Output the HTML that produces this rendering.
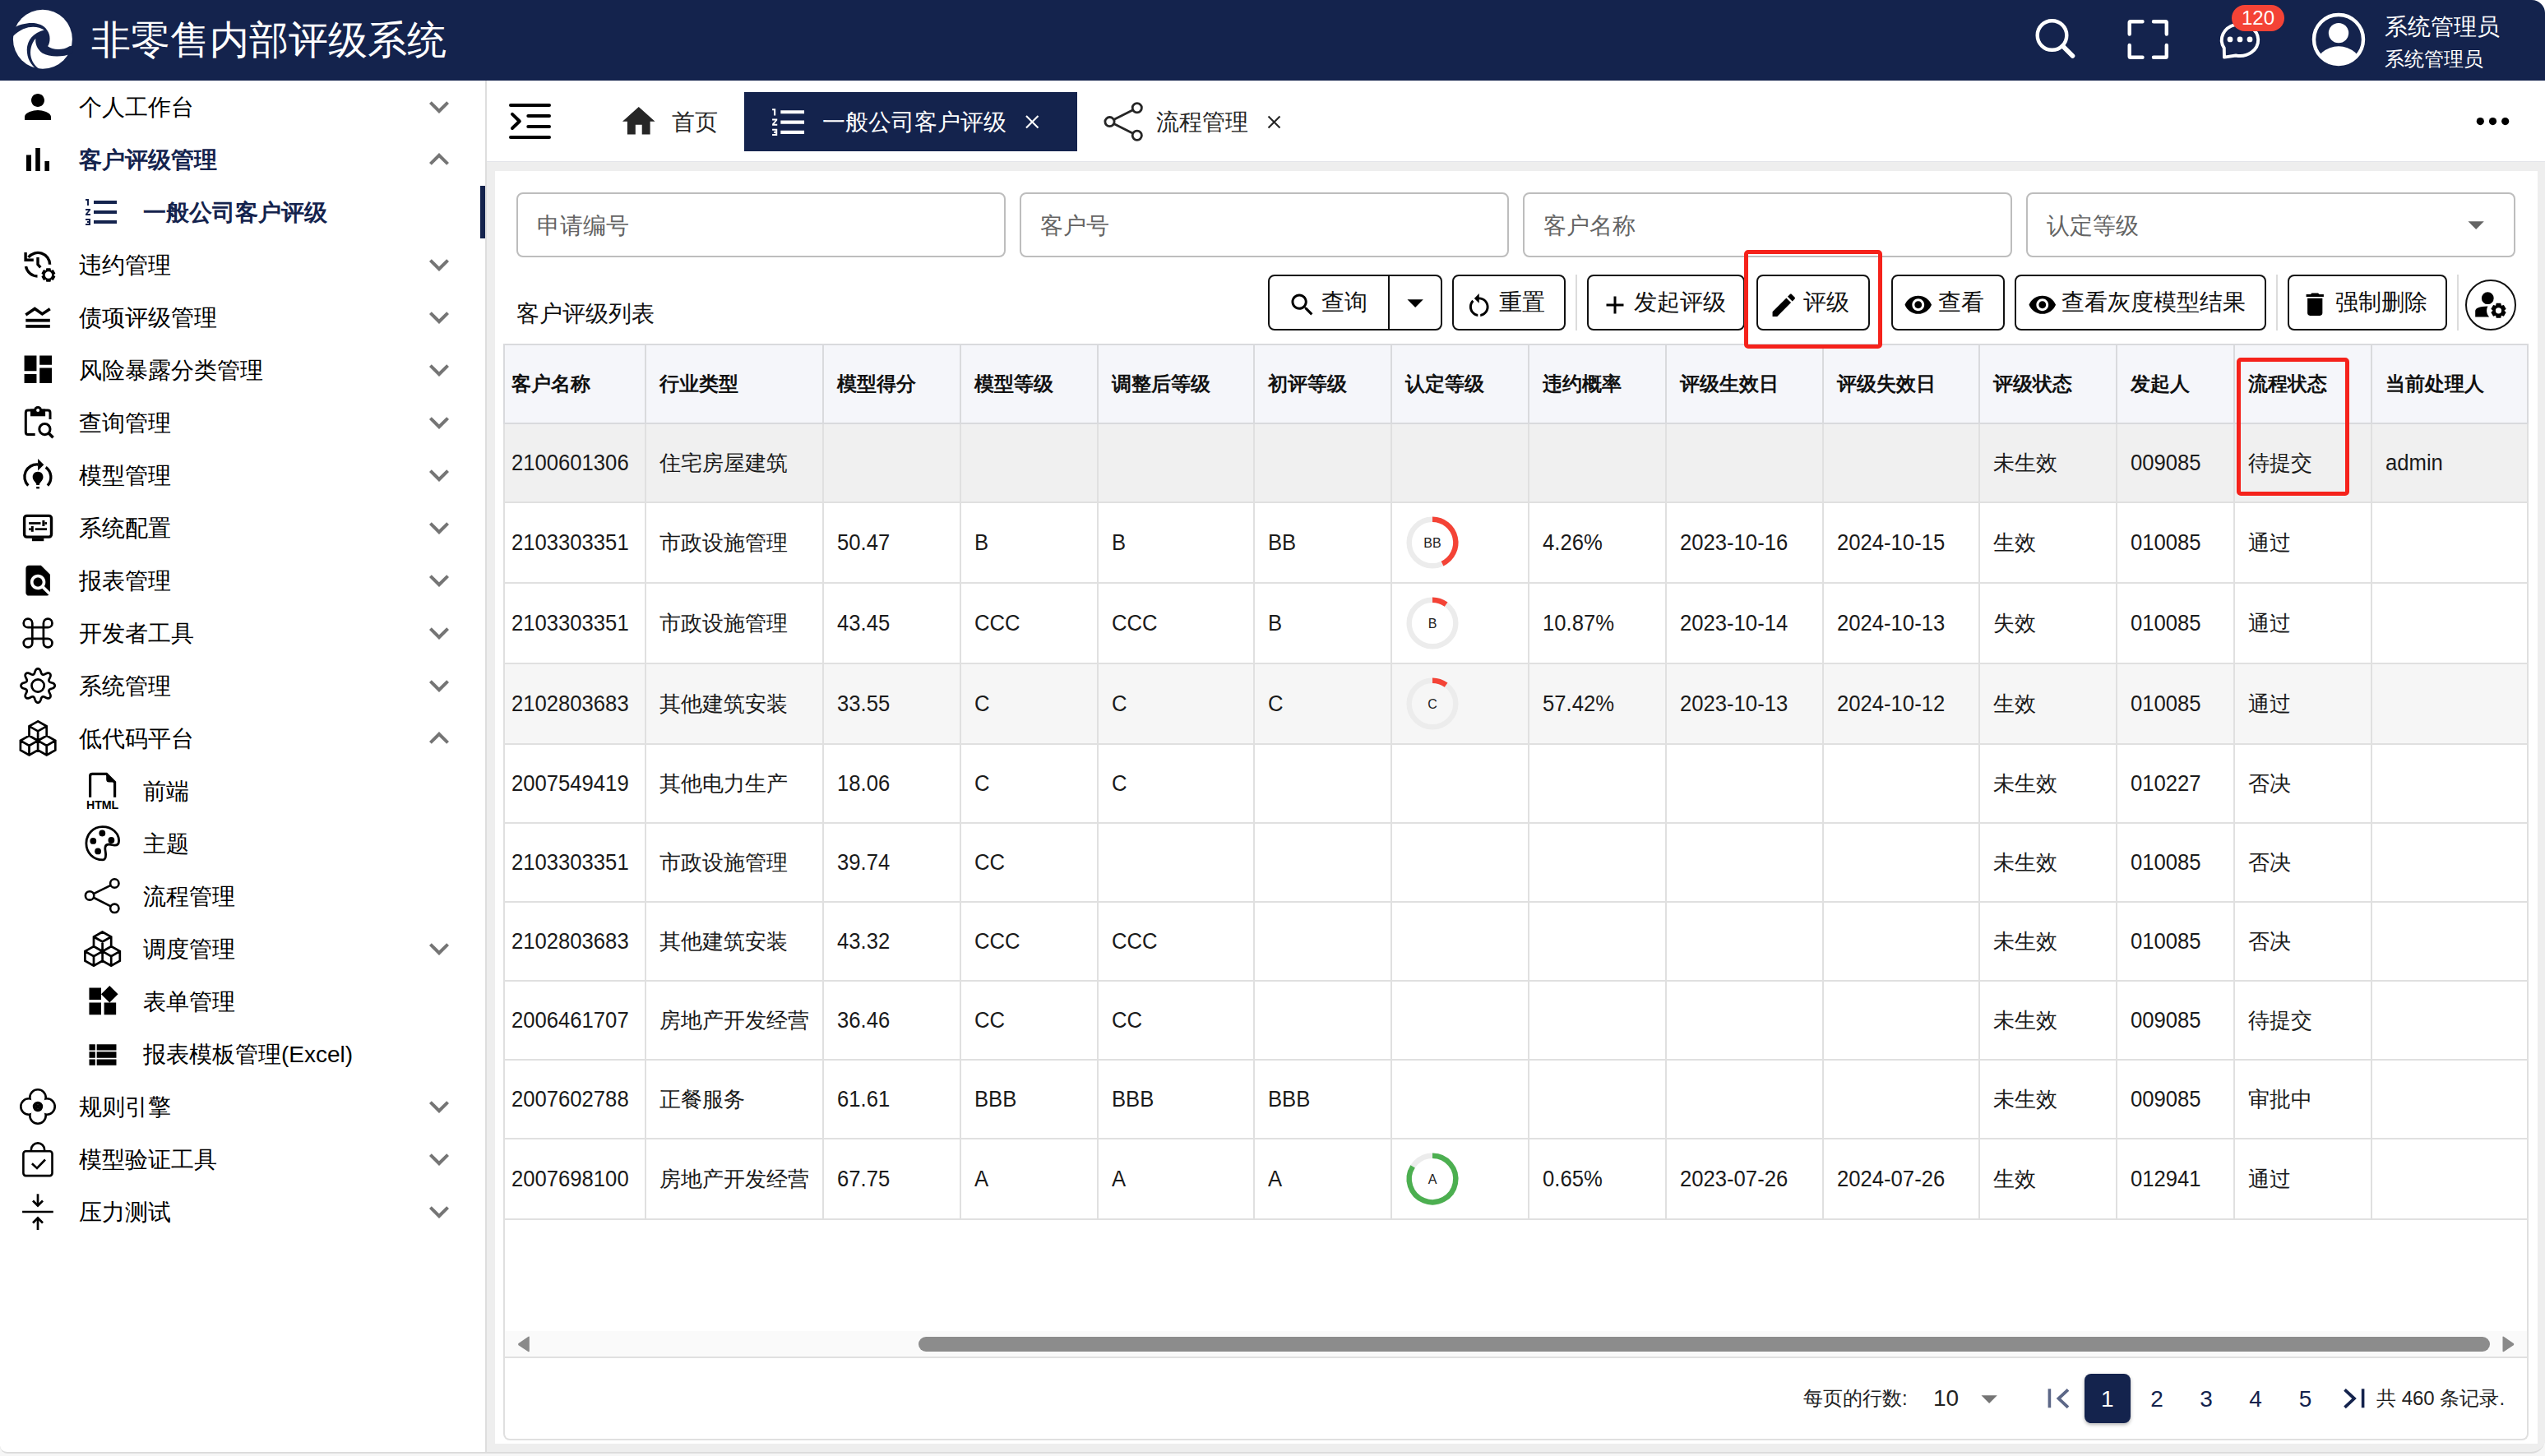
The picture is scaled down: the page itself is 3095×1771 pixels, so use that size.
<!DOCTYPE html>
<html><head><meta charset="utf-8"><style>
html,body{margin:0;padding:0;}
body{width:3095px;height:1771px;overflow:hidden;background:#f6f6f6;font-family:"Liberation Sans",sans-serif;position:relative;}
.a{position:absolute;}
.t{white-space:nowrap;}
</style></head><body>
<div class="a" style="left:0px;top:0px;width:3095px;height:1766px;background:#eeeeee;border-radius:0 0 16px 8px;"></div>
<div class="a" style="left:3040px;top:0px;width:55px;height:40px;background:#fff;"></div>
<div class="a" style="left:0px;top:0px;width:3095px;height:98px;background:#14234d;border-top-right-radius:16px;"></div>
<svg class="a" style="left:0px;top:0px;overflow:visible" width="100" height="98" viewBox="0 0 100 98" fill="#000"><circle cx="51.9" cy="47.8" r="36" fill="#fff"/><path fill="#14234d" d="M17.09,33.76 C29.49,26.38 50.17,24.90 57.25,36.71 C61.68,42.03 61.39,51.48 58.14,56.21 C63.16,60.64 76.15,61.82 84.42,56.21 L89.15,55.62 L87.97,65.07 C74.97,70.09 60.21,69.50 51.35,64.48 C45.44,60.34 42.49,53.25 43.37,46.76 C37.76,53.25 35.99,62.11 37.76,69.79 C39.53,76.88 44.26,81.61 48.39,84.56 L45.44,85.15 C37.17,78.95 32.74,70.97 32.74,60.34 C33.04,48.53 40.71,39.67 53.71,36.42 C45.44,31.40 30.67,29.33 15.32,44.39 Z"/></svg>
<div class="a t" style="left:111px;top:19.0px;font-size:48px;line-height:60px;color:#fff;font-weight:normal;">非零售内部评级系统</div>
<svg class="a" style="left:2460px;top:10px;overflow:visible" width="80" height="80" viewBox="2460 10 80 80" fill="#000"><g fill="none" stroke="#fff"><circle cx="2495.5" cy="43" r="17.8" stroke-width="4.4"/><line x1="2508.5" y1="56" x2="2520.5" y2="68" stroke-width="5.6" stroke-linecap="round"/></g></svg>
<svg class="a" style="left:2580px;top:15px;overflow:visible" width="70" height="70" viewBox="2580 15 70 70" fill="#000"><path fill="none" stroke="#fff" stroke-width="4.4" stroke-linejoin="round" stroke-linecap="round" d="M2589.7,41.5 V27.5 Q2589.7,26.2 2591,26.2 H2605.5 M2619,26.2 H2633.5 Q2634.8,26.2 2634.8,27.5 V41.5 M2634.8,55 V68.5 Q2634.8,69.8 2633.5,69.8 H2619 M2605.5,69.8 H2591 Q2589.7,69.8 2589.7,68.5 V55"/></svg>
<svg class="a" style="left:2690px;top:15px;overflow:visible" width="70" height="70" viewBox="2690 15 70 70" fill="#000"><path fill="none" stroke="#fff" stroke-width="3.9" stroke-linejoin="round" d="M2704.77,58.35 A22.2,19.3 0 1 1 2719.01,67.51 L2705,69.6 Z"/><circle cx="2712" cy="47.9" r="3.4" fill="#fff"/><circle cx="2724" cy="47.9" r="3.4" fill="#fff"/><circle cx="2736" cy="47.9" r="3.4" fill="#fff"/></svg>
<div class="a" style="left:2714px;top:6px;width:64px;height:32px;background:#f44336;border-radius:16px;"></div>
<div class="a t" style="left:2714px;top:5.8px;font-size:24px;line-height:32px;color:#fff;font-weight:normal;width:64px;text-align:center;">120</div>
<svg class="a" style="left:2805px;top:10px;overflow:visible" width="80" height="80" viewBox="2805 10 80 80" fill="#000"><defs><clipPath id="avc"><circle cx="2844" cy="48" r="29.6"/></clipPath></defs><circle cx="2844" cy="48" r="30" fill="none" stroke="#fff" stroke-width="4.4"/><circle cx="2844" cy="40.1" r="12.2" fill="#fff"/><g clip-path="url(#avc)"><ellipse cx="2844" cy="81.5" rx="28" ry="25.3" fill="#fff"/></g></svg>
<div class="a t" style="left:2900px;top:15.0px;font-size:28px;line-height:36px;color:#fff;font-weight:normal;">系统管理员</div>
<div class="a t" style="left:2900px;top:56.5px;font-size:24px;line-height:30px;color:#fff;font-weight:normal;">系统管理员</div>
<div class="a" style="left:0px;top:98px;width:590px;height:1668px;background:#fff;border-bottom-left-radius:8px;"></div>
<div class="a" style="left:590px;top:98px;width:2px;height:1668px;background:#dedede;"></div>
<div class="a" style="left:584px;top:226px;width:6px;height:64px;background:#14234d;"></div>
<div class="a t" style="left:96px;top:111.0px;font-size:28px;line-height:40px;color:#000;font-weight:normal;">个人工作台</div>
<svg class="a" style="left:510px;top:106px;overflow:visible" width="48.00" height="48.00" viewBox="0 0 24 24" fill="#757575"><path d="M16.59 8.59L12 13.17 7.41 8.59 6 10l6 6 6-6z"/></svg>
<div class="a t" style="left:96px;top:175.0px;font-size:28px;line-height:40px;color:#14234d;font-weight:bold;">客户评级管理</div>
<svg class="a" style="left:510px;top:170px;overflow:visible" width="48.00" height="48.00" viewBox="0 0 24 24" fill="#757575"><path d="M12 8l-6 6 1.41 1.41L12 10.83l4.59 4.58L18 14z"/></svg>
<div class="a t" style="left:174px;top:239.0px;font-size:28px;line-height:40px;color:#14234d;font-weight:bold;">一般公司客户评级</div>
<div class="a t" style="left:96px;top:303.0px;font-size:28px;line-height:40px;color:#000;font-weight:normal;">违约管理</div>
<svg class="a" style="left:510px;top:298px;overflow:visible" width="48.00" height="48.00" viewBox="0 0 24 24" fill="#757575"><path d="M16.59 8.59L12 13.17 7.41 8.59 6 10l6 6 6-6z"/></svg>
<div class="a t" style="left:96px;top:367.0px;font-size:28px;line-height:40px;color:#000;font-weight:normal;">债项评级管理</div>
<svg class="a" style="left:510px;top:362px;overflow:visible" width="48.00" height="48.00" viewBox="0 0 24 24" fill="#757575"><path d="M16.59 8.59L12 13.17 7.41 8.59 6 10l6 6 6-6z"/></svg>
<div class="a t" style="left:96px;top:431.0px;font-size:28px;line-height:40px;color:#000;font-weight:normal;">风险暴露分类管理</div>
<svg class="a" style="left:510px;top:426px;overflow:visible" width="48.00" height="48.00" viewBox="0 0 24 24" fill="#757575"><path d="M16.59 8.59L12 13.17 7.41 8.59 6 10l6 6 6-6z"/></svg>
<div class="a t" style="left:96px;top:495.0px;font-size:28px;line-height:40px;color:#000;font-weight:normal;">查询管理</div>
<svg class="a" style="left:510px;top:490px;overflow:visible" width="48.00" height="48.00" viewBox="0 0 24 24" fill="#757575"><path d="M16.59 8.59L12 13.17 7.41 8.59 6 10l6 6 6-6z"/></svg>
<div class="a t" style="left:96px;top:559.0px;font-size:28px;line-height:40px;color:#000;font-weight:normal;">模型管理</div>
<svg class="a" style="left:510px;top:554px;overflow:visible" width="48.00" height="48.00" viewBox="0 0 24 24" fill="#757575"><path d="M16.59 8.59L12 13.17 7.41 8.59 6 10l6 6 6-6z"/></svg>
<div class="a t" style="left:96px;top:623.0px;font-size:28px;line-height:40px;color:#000;font-weight:normal;">系统配置</div>
<svg class="a" style="left:510px;top:618px;overflow:visible" width="48.00" height="48.00" viewBox="0 0 24 24" fill="#757575"><path d="M16.59 8.59L12 13.17 7.41 8.59 6 10l6 6 6-6z"/></svg>
<div class="a t" style="left:96px;top:687.0px;font-size:28px;line-height:40px;color:#000;font-weight:normal;">报表管理</div>
<svg class="a" style="left:510px;top:682px;overflow:visible" width="48.00" height="48.00" viewBox="0 0 24 24" fill="#757575"><path d="M16.59 8.59L12 13.17 7.41 8.59 6 10l6 6 6-6z"/></svg>
<div class="a t" style="left:96px;top:751.0px;font-size:28px;line-height:40px;color:#000;font-weight:normal;">开发者工具</div>
<svg class="a" style="left:510px;top:746px;overflow:visible" width="48.00" height="48.00" viewBox="0 0 24 24" fill="#757575"><path d="M16.59 8.59L12 13.17 7.41 8.59 6 10l6 6 6-6z"/></svg>
<div class="a t" style="left:96px;top:815.0px;font-size:28px;line-height:40px;color:#000;font-weight:normal;">系统管理</div>
<svg class="a" style="left:510px;top:810px;overflow:visible" width="48.00" height="48.00" viewBox="0 0 24 24" fill="#757575"><path d="M16.59 8.59L12 13.17 7.41 8.59 6 10l6 6 6-6z"/></svg>
<div class="a t" style="left:96px;top:879.0px;font-size:28px;line-height:40px;color:#000;font-weight:normal;">低代码平台</div>
<svg class="a" style="left:510px;top:874px;overflow:visible" width="48.00" height="48.00" viewBox="0 0 24 24" fill="#757575"><path d="M12 8l-6 6 1.41 1.41L12 10.83l4.59 4.58L18 14z"/></svg>
<div class="a t" style="left:174px;top:943.0px;font-size:28px;line-height:40px;color:#000;font-weight:normal;">前端</div>
<div class="a t" style="left:174px;top:1007.0px;font-size:28px;line-height:40px;color:#000;font-weight:normal;">主题</div>
<div class="a t" style="left:174px;top:1071.0px;font-size:28px;line-height:40px;color:#000;font-weight:normal;">流程管理</div>
<div class="a t" style="left:174px;top:1135.0px;font-size:28px;line-height:40px;color:#000;font-weight:normal;">调度管理</div>
<svg class="a" style="left:510px;top:1130px;overflow:visible" width="48.00" height="48.00" viewBox="0 0 24 24" fill="#757575"><path d="M16.59 8.59L12 13.17 7.41 8.59 6 10l6 6 6-6z"/></svg>
<div class="a t" style="left:174px;top:1199.0px;font-size:28px;line-height:40px;color:#000;font-weight:normal;">表单管理</div>
<div class="a t" style="left:174px;top:1263.0px;font-size:28px;line-height:40px;color:#000;font-weight:normal;">报表模板管理(Excel)</div>
<div class="a t" style="left:96px;top:1327.0px;font-size:28px;line-height:40px;color:#000;font-weight:normal;">规则引擎</div>
<svg class="a" style="left:510px;top:1322px;overflow:visible" width="48.00" height="48.00" viewBox="0 0 24 24" fill="#757575"><path d="M16.59 8.59L12 13.17 7.41 8.59 6 10l6 6 6-6z"/></svg>
<div class="a t" style="left:96px;top:1391.0px;font-size:28px;line-height:40px;color:#000;font-weight:normal;">模型验证工具</div>
<svg class="a" style="left:510px;top:1386px;overflow:visible" width="48.00" height="48.00" viewBox="0 0 24 24" fill="#757575"><path d="M16.59 8.59L12 13.17 7.41 8.59 6 10l6 6 6-6z"/></svg>
<div class="a t" style="left:96px;top:1455.0px;font-size:28px;line-height:40px;color:#000;font-weight:normal;">压力测试</div>
<svg class="a" style="left:510px;top:1450px;overflow:visible" width="48.00" height="48.00" viewBox="0 0 24 24" fill="#757575"><path d="M16.59 8.59L12 13.17 7.41 8.59 6 10l6 6 6-6z"/></svg>
<svg class="a" style="left:22px;top:106px;overflow:visible" width="48.00" height="48.00" viewBox="0 0 24 24" fill="#000"><path d="M12 12c2.21 0 4-1.79 4-4s-1.79-4-4-4-4 1.79-4 4 1.79 4 4 4zm0 2c-2.67 0-8 1.34-8 4v2h16v-2c0-2.66-5.33-4-8-4z"/></svg>
<svg class="a" style="left:22px;top:170px;overflow:visible" width="48.00" height="48.00" viewBox="0 0 24 24" fill="#000"><path d="M5 9.2h3V19H5zM10.6 5h2.8v14h-2.8zm5.6 8H19v6h-2.8z"/></svg>
<svg class="a" style="left:100px;top:234px;overflow:visible" width="48.00" height="48.00" viewBox="0 0 24 24" fill="#14234d"><path d="M2 17h2v.5H3v1h1v.5H2v1h3v-4H2v1zm1-9h1V4H2v1h1v3zm-1 3h1.8L2 13.1v.9h3v-1H3.2L5 10.9V10H2v1zm5-6v2h14V5H7zm0 14h14v-2H7v2zm0-6h14v-2H7v2z"/></svg>
<svg class="a" style="left:20px;top:298px;overflow:visible" width="55" height="50" viewBox="20 298 55 50" fill="#000"><g fill="none" stroke="#000" stroke-width="3.4"><path d="M34.5,313 A14.6,14.6 0 0 1 60.6,321.7"/><path d="M31.5,324 A14.6,14.6 0 0 0 45.5,336"/><path d="M46,313 V321.7 L49.3,325.3"/></g><path d="M29.4,307 H32.8 V314.5 H40.8 V318 H29.4 Z"/><path fill-rule="evenodd" d="M56.33,326.19 L61.47,326.19 L62.10,328.91 L62.14,328.94 L64.81,328.12 L67.38,332.57 L65.34,334.48 L65.34,334.52 L67.38,336.43 L64.81,340.88 L62.14,340.06 L62.10,340.09 L61.47,342.81 L56.33,342.81 L55.70,340.09 L55.66,340.06 L52.99,340.88 L50.42,336.43 L52.46,334.52 L52.46,334.48 L50.42,332.57 L52.99,328.12 L55.66,328.94 L55.70,328.91 Z M63.1,334.5 A4.2,4.2 0 1 0 54.699999999999996,334.5 A4.2,4.2 0 1 0 63.1,334.5 Z"/></svg>
<svg class="a" style="left:25px;top:365px;overflow:visible" width="45" height="40" viewBox="25 365 45 40" fill="#000"><polyline fill="none" stroke="#000" stroke-width="3.5" points="31.3,383 42.3,375.5 51.4,382 60.8,375.8"/><rect x="31.3" y="387.8" width="29.5" height="3.8"/><rect x="31.3" y="395" width="29.5" height="3.8"/></svg>
<svg class="a" style="left:23.9px;top:427.4px;overflow:visible" width="44.64" height="44.64" viewBox="0 0 24 24" fill="#000"><path d="M3 13h8V3H3v10zm0 8h8v-6H3v6zm10 0h8V11h-8v10zm0-18v6h8V3h-8z"/></svg>
<svg class="a" style="left:20px;top:488px;overflow:visible" width="55" height="50" viewBox="20 488 55 50" fill="#000"><path fill="none" stroke="#000" stroke-width="3" d="M42.7,528.5 H34 Q31.3,528.5 31.3,525.8 V502 Q31.3,499.1 34,499.1 H58 Q61,499.1 61,502 V510"/><rect x="37" y="497.6" width="18.1" height="8.7"/><circle cx="46.1" cy="499" r="5.1"/><circle cx="46.1" cy="499" r="2" fill="#fff"/><circle cx="54.4" cy="522.1" r="6.6" fill="none" stroke="#000" stroke-width="3"/><line x1="59.3" y1="527" x2="64.6" y2="532.3" stroke="#000" stroke-width="3.6"/></svg>
<svg class="a" style="left:20px;top:552px;overflow:visible" width="55" height="50" viewBox="20 552 55 50" fill="#000"><g fill="none" stroke="#000" stroke-width="3.3"><path d="M34.3,590.6 A15,15 0 0 1 46.1,565"/><path d="M55.7,568.3 A15,15 0 0 1 57.9,590.6"/></g><path d="M46.1,558 L53.3,565.2 L46.1,572.4 Z"/><path d="M46.1,573.8 C49.9,573.8 52.5,576.6 52.5,580.2 C52.5,582.6 51.3,584 49.8,586 L48,588.5 V590 H44.2 V588.5 L42.4,586 C40.9,584 39.7,582.6 39.7,580.2 C39.7,576.6 42.3,573.8 46.1,573.8 Z"/><rect x="44.2" y="592" width="3.8" height="2.4"/></svg>
<svg class="a" style="left:20px;top:615px;overflow:visible" width="55" height="50" viewBox="20 615 55 50" fill="#000"><rect x="29.6" y="627.4" width="32.9" height="25.7" rx="3" fill="none" stroke="#000" stroke-width="3.4"/><rect x="38.9" y="654.4" width="14.4" height="3.8"/><rect x="35.1" y="635.1" width="14.4" height="2.7"/><rect x="51.4" y="632.9" width="3" height="7.1"/><rect x="54.4" y="635.1" width="2.6" height="2.7"/><rect x="42.7" y="642.3" width="14.3" height="2.7"/><rect x="37.8" y="640" width="3" height="6.8"/><rect x="35.1" y="642.3" width="2.7" height="2.7"/></svg>
<svg class="a" style="left:23.9px;top:683.6px;overflow:visible" width="44.26" height="44.26" viewBox="0 0 24 24" fill="#000"><path d="M20 19.59V8l-6-6H6c-1.1 0-1.99.9-1.99 2L4 20c0 1.1.89 2 1.99 2H18c.45 0 .85-.15 1.19-.4l-4.43-4.43c-.8.52-1.74.83-2.76.83-2.76 0-5-2.24-5-5s2.24-5 5-5 5 2.24 5 5c0 1.02-.31 1.96-.83 2.75L20 19.59zM9 13c0 1.66 1.34 3 3 3s3-1.34 3-3-1.34-3-3-3-3 1.34-3 3z"/></svg>
<svg class="a" style="left:20px;top:745px;overflow:visible" width="55" height="50" viewBox="20 745 55 50" fill="#000"><path fill="none" stroke="#000" stroke-width="2.7" d="M39.300000000000004,776.8 V757.9000000000001 A5.3,5.3 0 1 0 34.00000000000001,763.2 H58.199999999999996 A5.3,5.3 0 1 0 52.9,757.9000000000001 V782.0999999999999 A5.3,5.3 0 1 0 58.199999999999996,776.8 H34.00000000000001 A5.3,5.3 0 1 0 39.300000000000004,782.0999999999999 Z"/></svg>
<svg class="a" style="left:15px;top:805px;overflow:visible" width="62" height="62" viewBox="15 805 62 62" fill="#000"><path fill="none" stroke="#000" stroke-width="2.7" d="M66.70,834.00 L66.65,834.54 L66.50,835.07 L66.24,835.59 L65.85,836.08 L65.30,836.53 L64.61,836.93 L63.79,837.28 L62.93,837.58 L62.11,837.84 L61.39,838.10 L60.81,838.36 L60.36,838.63 L60.02,838.93 L59.77,839.25 L59.59,839.59 L59.47,839.95 L59.43,840.36 L59.46,840.81 L59.58,841.32 L59.81,841.92 L60.14,842.60 L60.53,843.37 L60.93,844.19 L61.26,845.01 L61.46,845.79 L61.53,846.50 L61.46,847.12 L61.28,847.67 L61.01,848.15 L60.67,848.57 L60.25,848.91 L59.77,849.18 L59.22,849.36 L58.60,849.43 L57.89,849.36 L57.11,849.16 L56.29,848.83 L55.47,848.43 L54.70,848.04 L54.02,847.71 L53.42,847.48 L52.91,847.36 L52.46,847.33 L52.05,847.37 L51.69,847.49 L51.35,847.67 L51.03,847.92 L50.73,848.26 L50.46,848.71 L50.20,849.29 L49.94,850.01 L49.68,850.83 L49.38,851.69 L49.03,852.51 L48.63,853.20 L48.18,853.75 L47.69,854.14 L47.17,854.40 L46.64,854.55 L46.10,854.60 L45.56,854.55 L45.03,854.40 L44.51,854.14 L44.02,853.75 L43.57,853.20 L43.17,852.51 L42.82,851.69 L42.52,850.83 L42.26,850.01 L42.00,849.29 L41.74,848.71 L41.47,848.26 L41.17,847.92 L40.85,847.67 L40.51,847.49 L40.15,847.37 L39.74,847.33 L39.29,847.36 L38.78,847.48 L38.18,847.71 L37.50,848.04 L36.73,848.43 L35.91,848.83 L35.09,849.16 L34.31,849.36 L33.60,849.43 L32.98,849.36 L32.43,849.18 L31.95,848.91 L31.53,848.57 L31.19,848.15 L30.92,847.67 L30.74,847.12 L30.67,846.50 L30.74,845.79 L30.94,845.01 L31.27,844.19 L31.67,843.37 L32.06,842.60 L32.39,841.92 L32.62,841.32 L32.74,840.81 L32.77,840.36 L32.73,839.95 L32.61,839.59 L32.43,839.25 L32.18,838.93 L31.84,838.63 L31.39,838.36 L30.81,838.10 L30.09,837.84 L29.27,837.58 L28.41,837.28 L27.59,836.93 L26.90,836.53 L26.35,836.08 L25.96,835.59 L25.70,835.07 L25.55,834.54 L25.50,834.00 L25.55,833.46 L25.70,832.93 L25.96,832.41 L26.35,831.92 L26.90,831.47 L27.59,831.07 L28.41,830.72 L29.27,830.42 L30.09,830.16 L30.81,829.90 L31.39,829.64 L31.84,829.37 L32.18,829.07 L32.43,828.75 L32.61,828.41 L32.73,828.05 L32.77,827.64 L32.74,827.19 L32.62,826.68 L32.39,826.08 L32.06,825.40 L31.67,824.63 L31.27,823.81 L30.94,822.99 L30.74,822.21 L30.67,821.50 L30.74,820.88 L30.92,820.33 L31.19,819.85 L31.53,819.43 L31.95,819.09 L32.43,818.82 L32.98,818.64 L33.60,818.57 L34.31,818.64 L35.09,818.84 L35.91,819.17 L36.73,819.57 L37.50,819.96 L38.18,820.29 L38.78,820.52 L39.29,820.64 L39.74,820.67 L40.15,820.63 L40.51,820.51 L40.85,820.33 L41.17,820.08 L41.47,819.74 L41.74,819.29 L42.00,818.71 L42.26,817.99 L42.52,817.17 L42.82,816.31 L43.17,815.49 L43.57,814.80 L44.02,814.25 L44.51,813.86 L45.03,813.60 L45.56,813.45 L46.10,813.40 L46.64,813.45 L47.17,813.60 L47.69,813.86 L48.18,814.25 L48.63,814.80 L49.03,815.49 L49.38,816.31 L49.68,817.17 L49.94,817.99 L50.20,818.71 L50.46,819.29 L50.73,819.74 L51.03,820.08 L51.35,820.33 L51.69,820.51 L52.05,820.63 L52.46,820.67 L52.91,820.64 L53.42,820.52 L54.02,820.29 L54.70,819.96 L55.47,819.57 L56.29,819.17 L57.11,818.84 L57.89,818.64 L58.60,818.57 L59.22,818.64 L59.77,818.82 L60.25,819.09 L60.67,819.43 L61.01,819.85 L61.28,820.33 L61.46,820.88 L61.53,821.50 L61.46,822.21 L61.26,822.99 L60.93,823.81 L60.53,824.63 L60.14,825.40 L59.81,826.08 L59.58,826.68 L59.46,827.19 L59.43,827.64 L59.47,828.05 L59.59,828.41 L59.77,828.75 L60.02,829.07 L60.36,829.37 L60.81,829.64 L61.39,829.90 L62.11,830.16 L62.93,830.42 L63.79,830.72 L64.61,831.07 L65.30,831.47 L65.85,831.92 L66.24,832.41 L66.50,832.93 L66.65,833.46 L66.70,834.00 Z"/><circle cx="46.1" cy="834" r="7.6" fill="none" stroke="#000" stroke-width="2.7"/></svg>
<svg class="a" style="left:15px;top:870px;overflow:visible" width="62" height="55" viewBox="15 870 62 55" fill="#000"><path fill="none" stroke="#000" stroke-width="2.7" stroke-linejoin="miter" d="M46.10,877.30 L35.50,883.30 L35.50,894.90 L46.10,900.90 L56.70,894.90 L56.70,883.30 Z M35.50,883.30 L46.10,889.30 L56.70,883.30 M46.10,889.30 L46.10,900.90 M35.50,894.90 L24.90,900.90 L24.90,912.50 L35.50,918.50 L46.10,912.50 L46.10,900.90 Z M24.90,900.90 L35.50,906.90 L46.10,900.90 M35.50,906.90 L35.50,918.50 M56.70,894.90 L46.10,900.90 L46.10,912.50 L56.70,918.50 L67.30,912.50 L67.30,900.90 Z M46.10,900.90 L56.70,906.90 L67.30,900.90 M56.70,906.90 L56.70,918.50"/></svg>
<svg class="a" style="left:100px;top:935px;overflow:visible" width="50" height="52" viewBox="100 935 50 52" fill="#000"><path fill="none" stroke="#000" stroke-width="3.2" d="M109.6,969.8 V944 Q109.6,941.4 112.2,941.4 H129.5 L139.6,951.5 V969.8"/><path d="M129.2,940.4 V948 Q129.2,951.5 132.7,951.5 H140.3 Z"/><text x="124.6" y="983.5" font-family="Liberation Sans" font-weight="bold" font-size="14.2" text-anchor="middle" fill="#000">HTML</text></svg>
<svg class="a" style="left:100px;top:1000px;overflow:visible" width="50" height="52" viewBox="100 1000 50 52" fill="#000"><path fill="none" stroke="#000" stroke-width="2.8" d="M124.7,1005.7 C136.5,1005.7 144.6,1013.6 144.6,1022.5 C144.6,1026.5 142.8,1028.2 139.6,1028.2 C136.3,1028.2 134.5,1027 132.4,1027 C129.8,1027 127.8,1028.8 127.8,1032 C127.8,1034.5 128.6,1036.5 128.6,1039.8 C128.6,1043.6 127.3,1045.9 125,1045.9 C113.5,1045.9 104.9,1037.5 104.9,1025.8 C104.9,1014.6 113.5,1005.7 124.7,1005.7 Z"/><circle cx="124.3" cy="1013.5" r="3.9"/><circle cx="113.3" cy="1022.9" r="3.9"/><circle cx="135.4" cy="1022" r="3.9"/><circle cx="119.1" cy="1035.4" r="3.9"/></svg>
<svg class="a" style="left:100px;top:1064px;overflow:visible" width="50" height="52" viewBox="100 1064 50 52" fill="#000"><g fill="none" stroke="#000" stroke-width="2.6"><circle cx="139.3" cy="1074.5" r="5.2"/><circle cx="109.1" cy="1089.4" r="5.2"/><circle cx="139.3" cy="1104.8" r="5.2"/><line x1="113.76" y1="1087.10" x2="134.64" y2="1076.80"/><line x1="113.73" y1="1091.76" x2="134.67" y2="1102.44"/></g></svg>
<svg class="a" style="left:95px;top:1126px;overflow:visible" width="62" height="55" viewBox="95 1126 62 55" fill="#000"><path fill="none" stroke="#000" stroke-width="2.7" stroke-linejoin="miter" d="M124.60,1133.50 L114.00,1139.50 L114.00,1151.10 L124.60,1157.10 L135.20,1151.10 L135.20,1139.50 Z M114.00,1139.50 L124.60,1145.50 L135.20,1139.50 M124.60,1145.50 L124.60,1157.10 M114.00,1151.10 L103.40,1157.10 L103.40,1168.70 L114.00,1174.70 L124.60,1168.70 L124.60,1157.10 Z M103.40,1157.10 L114.00,1163.10 L124.60,1157.10 M114.00,1163.10 L114.00,1174.70 M135.20,1151.10 L124.60,1157.10 L124.60,1168.70 L135.20,1174.70 L145.80,1168.70 L145.80,1157.10 Z M124.60,1157.10 L135.20,1163.10 L145.80,1157.10 M135.20,1163.10 L135.20,1174.70"/></svg>
<svg class="a" style="left:102.5px;top:1196.3px;overflow:visible" width="43.61" height="43.61" viewBox="0 0 24 24" fill="#000"><path d="M13 13v8h8v-8h-8zM3 21h8v-8H3v8zM3 3v8h8V3H3zm13.66-1.31L11 7.34 16.66 13l5.66-5.66-5.66-5.65z"/></svg>
<svg class="a" style="left:102.5px;top:1260.5px;overflow:visible" width="43.99" height="43.99" viewBox="0 0 24 24" fill="#000"><path d="M3 14h4v-4H3v4zm0 5h4v-4H3v4zM3 9h4V5H3v4zm5 5h13v-4H8v4zm0 5h13v-4H8v4zM8 5v4h13V5H8z"/></svg>
<svg class="a" style="left:18px;top:1318px;overflow:visible" width="58" height="56" viewBox="18 1318 58 56" fill="#000"><g fill="#000"><circle cx="46" cy="1335" r="11"/><circle cx="35" cy="1346" r="11"/><circle cx="57" cy="1346" r="11"/><circle cx="46" cy="1357" r="11"/></g><g fill="#fff"><circle cx="46" cy="1335" r="8.4"/><circle cx="35" cy="1346" r="8.4"/><circle cx="57" cy="1346" r="8.4"/><circle cx="46" cy="1357" r="8.4"/></g><circle cx="46" cy="1346" r="4.3" fill="none" stroke="#000" stroke-width="3.8"/></svg>
<svg class="a" style="left:20px;top:1383px;overflow:visible" width="55" height="55" viewBox="20 1383 55 55" fill="#000"><g fill="none" stroke="#000" stroke-width="2.6"><rect x="28.4" y="1400.3" width="35.1" height="29.8" rx="3"/><path d="M37.9,1400.3 V1398.5 A8.1,8.1 0 0 1 54.1,1398.5 V1400.3"/><polyline points="38.9,1415.2 45,1421 55,1410.5"/></g></svg>
<svg class="a" style="left:20px;top:1447px;overflow:visible" width="55" height="55" viewBox="20 1447 55 55" fill="#000"><g fill="none" stroke="#000" stroke-width="2.7"><line x1="27.1" y1="1474" x2="64.8" y2="1474"/><line x1="46" y1="1452.3" x2="46" y2="1466.5"/><polyline points="40,1460.5 46,1466.5 52,1460.5"/><line x1="46" y1="1496" x2="46" y2="1481.5"/><polyline points="40,1487.5 46,1481.5 52,1487.5"/></g></svg>
<div class="a" style="left:592px;top:98px;width:2503px;height:98px;background:#fff;"></div>
<svg class="a" style="left:610px;top:115px;overflow:visible" width="70" height="60" viewBox="610 115 70 60" fill="#000"><g stroke="#000" stroke-width="4" stroke-linecap="round" fill="none"><line x1="621" y1="128" x2="668" y2="128"/><line x1="642.3" y1="141" x2="668" y2="141"/><line x1="642.3" y1="154" x2="668" y2="154"/><line x1="621" y1="167" x2="668" y2="167"/><polyline points="623,138.8 631.8,147.5 623,156" stroke-linejoin="round"/></g></svg>
<svg class="a" style="left:752.60px;top:124.10px;overflow:visible" width="47.52" height="47.52" viewBox="0 0 24 24" fill="#262626"><path d="M10 20v-6h4v6h5v-8h3L12 3 2 12h3v8z"/></svg>
<div class="a t" style="left:817px;top:128.5px;font-size:28px;line-height:40px;color:#262626;font-weight:normal;">首页</div>
<div class="a" style="left:905px;top:112px;width:405px;height:72px;background:#14234d;"></div>
<svg class="a" style="left:935.40px;top:123.80px;overflow:visible" width="49.20" height="49.20" viewBox="0 0 24 24" fill="#fff"><path d="M2 17h2v.5H3v1h1v.5H2v1h3v-4H2v1zm1-9h1V4H2v1h1v3zm-1 3h1.8L2 13.1v.9h3v-1H3.2L5 10.9V10H2v1zm5-6v2h14V5H7zm0 14h14v-2H7v2zm0-6h14v-2H7v2z"/></svg>
<div class="a t" style="left:1000px;top:128.5px;font-size:28px;line-height:40px;color:#fff;font-weight:normal;">一般公司客户评级</div>
<svg class="a" style="left:1240px;top:133px;overflow:visible" width="30" height="30" viewBox="1240 133 30 30" fill="#000"><g stroke="#fff" stroke-width="2.1"><line x1="1248" y1="141" x2="1262.5" y2="155.5"/><line x1="1262.5" y1="141" x2="1248" y2="155.5"/></g></svg>
<svg class="a" style="left:1335px;top:118px;overflow:visible" width="62" height="60" viewBox="1335 118 62 60" fill="#000"><g fill="none" stroke="#262626" stroke-width="2.8"><circle cx="1382.8" cy="131.3" r="5.6"/><circle cx="1349.5" cy="148.1" r="5.6"/><circle cx="1382.8" cy="164.8" r="5.6"/><line x1="1354.50" y1="145.58" x2="1377.80" y2="133.82"/><line x1="1354.51" y1="150.61" x2="1377.79" y2="162.29"/></g></svg>
<div class="a t" style="left:1406px;top:128.5px;font-size:28px;line-height:40px;color:#262626;font-weight:normal;">流程管理</div>
<svg class="a" style="left:1535px;top:133px;overflow:visible" width="30" height="30" viewBox="1535 133 30 30" fill="#000"><g stroke="#262626" stroke-width="2.1"><line x1="1542.5" y1="141.5" x2="1556.5" y2="155.5"/><line x1="1556.5" y1="141.5" x2="1542.5" y2="155.5"/></g></svg>
<svg class="a" style="left:3005px;top:135px;overflow:visible" width="55" height="25" viewBox="3005 135 55 25" fill="#000"><circle cx="3016.3" cy="147.6" r="4.6"/><circle cx="3031.5" cy="147.6" r="4.6"/><circle cx="3046.7" cy="147.6" r="4.6"/></svg>
<div class="a" style="left:592px;top:196px;width:2503px;height:1px;background:#e3e4e9;"></div>
<div class="a" style="left:602px;top:208px;width:2484px;height:1548px;background:#fff;"></div>
<div class="a" style="left:628px;top:234px;width:591px;height:75px;border:2px solid #bdbdbd;border-radius:8px;"></div>
<div class="a t" style="left:653px;top:255.0px;font-size:28px;line-height:40px;color:#646464;font-weight:normal;">申请编号</div>
<div class="a" style="left:1240px;top:234px;width:591px;height:75px;border:2px solid #bdbdbd;border-radius:8px;"></div>
<div class="a t" style="left:1265px;top:255.0px;font-size:28px;line-height:40px;color:#646464;font-weight:normal;">客户号</div>
<div class="a" style="left:1852px;top:234px;width:591px;height:75px;border:2px solid #bdbdbd;border-radius:8px;"></div>
<div class="a t" style="left:1877px;top:255.0px;font-size:28px;line-height:40px;color:#646464;font-weight:normal;">客户名称</div>
<div class="a" style="left:2464px;top:234px;width:591px;height:75px;border:2px solid #bdbdbd;border-radius:8px;"></div>
<div class="a t" style="left:2489px;top:255.0px;font-size:28px;line-height:40px;color:#646464;font-weight:normal;">认定等级</div>
<svg class="a" style="left:2988.49px;top:250.40px;overflow:visible" width="46.32" height="46.32" viewBox="0 0 24 24" fill="#646464"><path d="M7 10l5 5 5-5z"/></svg>
<div class="a t" style="left:628px;top:362.0px;font-size:28px;line-height:40px;color:#111;font-weight:normal;">客户评级列表</div>
<div class="a" style="left:1542px;top:334px;width:208px;height:64px;border:2px solid #111;border-radius:8px;"></div>
<div class="a" style="left:1688px;top:334px;width:2px;height:68px;background:#111;"></div>
<svg class="a" style="left:1565.50px;top:352.50px;overflow:visible" width="35.66" height="35.66" viewBox="0 0 24 24" fill="#000"><path d="M15.5 14h-.79l-.28-.27C15.41 12.59 16 11.11 16 9.5 16 5.91 13.09 3 9.5 3S3 5.91 3 9.5 5.91 16 9.5 16c1.61 0 3.09-.59 4.23-1.57l.27.28v.79l5 4.99L20.49 19l-4.99-5zm-6 0C7.01 14 5 11.99 5 9.5S7.01 5 9.5 5 14 7.01 14 9.5 11.99 14 9.5 14z"/></svg>
<div class="a t" style="left:1607px;top:348.0px;font-size:28px;line-height:40px;color:#111;font-weight:normal;">查询</div>
<svg class="a" style="left:1698.19px;top:344.50px;overflow:visible" width="46.32" height="46.32" viewBox="0 0 24 24" fill="#000"><path d="M7 10l5 5 5-5z"/></svg>
<div class="a" style="left:1766px;top:334px;width:134px;height:64px;border:2px solid #111;border-radius:8px;"></div>
<svg class="a" style="left:1781.10px;top:353.70px;overflow:visible" width="35.52" height="35.52" viewBox="0 0 24 24" fill="#000"><path d="M12 5V2L8 6l4 4V7c3.31 0 6 2.69 6 6 0 2.97-2.17 5.43-5 5.91v2.02c3.95-.49 7-3.85 7-7.93 0-4.42-3.58-8-8-8zm-6 8c0-1.65.67-3.15 1.76-4.24L6.34 7.34C4.9 8.79 4 10.79 4 13c0 4.08 3.05 7.44 7 7.93v-2.02c-2.830-.48-5-2.94-5-5.91z"/></svg>
<div class="a t" style="left:1823px;top:348.0px;font-size:28px;line-height:40px;color:#111;font-weight:normal;">重置</div>
<div class="a" style="left:1916px;top:334px;width:2px;height:68px;background:#dcdcdc;"></div>
<div class="a" style="left:1930px;top:334px;width:188px;height:64px;border:2px solid #111;border-radius:8px;"></div>
<svg class="a" style="left:1945.50px;top:353.10px;overflow:visible" width="36.00" height="36.00" viewBox="0 0 24 24" fill="#000"><path d="M19 13h-6v6h-2v-6H5v-2h6V5h2v6h6v2z"/></svg>
<div class="a t" style="left:1987px;top:348.0px;font-size:28px;line-height:40px;color:#111;font-weight:normal;">发起评级</div>
<div class="a" style="left:2136px;top:334px;width:134px;height:64px;border:2px solid #111;border-radius:8px;"></div>
<svg class="a" style="left:2150.90px;top:353.30px;overflow:visible" width="36.48" height="36.48" viewBox="0 0 24 24" fill="#000"><path d="M3 17.25V21h3.75L17.81 9.94l-3.75-3.75L3 17.25zM20.71 7.04c.39-.39.39-1.02 0-1.41l-2.34-2.34c-.39-.39-1.02-.39-1.41 0l-1.830 1.83 3.75 3.75 1.83-1.83z"/></svg>
<div class="a t" style="left:2193px;top:348.0px;font-size:28px;line-height:40px;color:#111;font-weight:normal;">评级</div>
<div class="a" style="left:2300px;top:334px;width:134px;height:64px;border:2px solid #111;border-radius:8px;"></div>
<svg class="a" style="left:2315.30px;top:353.30px;overflow:visible" width="35.52" height="35.52" viewBox="0 0 24 24" fill="#000"><path d="M12 4.5C7 4.5 2.73 7.61 1 12c1.73 4.39 6 7.5 11 7.5s9.27-3.11 11-7.5c-1.73-4.39-6-7.5-11-7.5zM12 17c-2.76 0-5-2.24-5-5s2.24-5 5-5 5 2.24 5 5-2.24 5-5 5zm0-8c-1.66 0-3 1.34-3 3s1.34 3 3 3 3-1.34 3-3-1.34-3-3-3z"/></svg>
<div class="a t" style="left:2357px;top:348.0px;font-size:28px;line-height:40px;color:#111;font-weight:normal;">查看</div>
<div class="a" style="left:2450px;top:334px;width:302px;height:64px;border:2px solid #111;border-radius:8px;"></div>
<svg class="a" style="left:2465.70px;top:353.10px;overflow:visible" width="35.52" height="35.52" viewBox="0 0 24 24" fill="#000"><path d="M12 4.5C7 4.5 2.73 7.61 1 12c1.73 4.39 6 7.5 11 7.5s9.27-3.11 11-7.5c-1.73-4.39-6-7.5-11-7.5zM12 17c-2.76 0-5-2.24-5-5s2.24-5 5-5 5 2.24 5 5-2.24 5-5 5zm0-8c-1.66 0-3 1.34-3 3s1.34 3 3 3 3-1.34 3-3-1.34-3-3-3z"/></svg>
<div class="a t" style="left:2507px;top:348.0px;font-size:28px;line-height:40px;color:#111;font-weight:normal;">查看灰度模型结果</div>
<div class="a" style="left:2768px;top:334px;width:2px;height:68px;background:#dcdcdc;"></div>
<div class="a" style="left:2782px;top:334px;width:190px;height:64px;border:2px solid #111;border-radius:8px;"></div>
<svg class="a" style="left:2797.40px;top:352.40px;overflow:visible" width="36.48" height="36.48" viewBox="0 0 24 24" fill="#000"><path d="M6 19c0 1.1.9 2 2 2h8c1.1 0 2-.9 2-2V7H6v12zM19 4h-3.5l-1-1h-5l-1 1H5v2h14V4z"/></svg>
<div class="a t" style="left:2839.5px;top:348.0px;font-size:28px;line-height:40px;color:#111;font-weight:normal;">强制删除</div>
<div class="a" style="left:2988px;top:334px;width:2px;height:68px;background:#dcdcdc;"></div>
<div class="a" style="left:2998px;top:340px;width:58px;height:58px;border:2px solid #111;border-radius:50%;"></div>
<svg class="a" style="left:3000px;top:345px;overflow:visible" width="55" height="50" viewBox="3000 345 55 50" fill="#000"><circle cx="3025.3" cy="362.7" r="7.4"/><path d="M3010.2,385.6 V378.5 C3010.2,374.5 3015,372.6 3025.5,372.4 C3023.3,376.5 3023.6,381.5 3027.2,385.6 Z"/><path fill-rule="evenodd" d="M3035.72,368.82 L3041.28,368.82 L3041.96,371.76 L3042.00,371.79 L3044.89,370.90 L3047.67,375.72 L3045.46,377.77 L3045.46,377.83 L3047.67,379.88 L3044.89,384.70 L3042.00,383.81 L3041.96,383.84 L3041.28,386.78 L3035.72,386.78 L3035.04,383.84 L3035.00,383.81 L3032.11,384.70 L3029.33,379.88 L3031.54,377.83 L3031.54,377.77 L3029.33,375.72 L3032.11,370.90 L3035.00,371.79 L3035.04,371.76 Z M3042.1,377.8 A3.6,3.6 0 1 0 3034.9,377.8 A3.6,3.6 0 1 0 3042.1,377.8 Z"/></svg>
<div class="a" style="left:612px;top:418px;width:2463px;height:96px;background:#f5f6fa;"></div>
<div class="a" style="left:612px;top:516px;width:2463px;height:94px;background:#f0f0f0;"></div>
<div class="a" style="left:612px;top:808px;width:2463px;height:96px;background:#f6f6f6;"></div>
<div class="a" style="left:612px;top:418px;width:2px;height:98px;background:#d9dadd;"></div>
<div class="a" style="left:612px;top:516px;width:2px;height:968px;background:#e0e0e0;"></div>
<div class="a" style="left:784px;top:418px;width:2px;height:98px;background:#d9dadd;"></div>
<div class="a" style="left:784px;top:516px;width:2px;height:968px;background:#e0e0e0;"></div>
<div class="a" style="left:1000px;top:418px;width:2px;height:98px;background:#d9dadd;"></div>
<div class="a" style="left:1000px;top:516px;width:2px;height:968px;background:#e0e0e0;"></div>
<div class="a" style="left:1167px;top:418px;width:2px;height:98px;background:#d9dadd;"></div>
<div class="a" style="left:1167px;top:516px;width:2px;height:968px;background:#e0e0e0;"></div>
<div class="a" style="left:1334px;top:418px;width:2px;height:98px;background:#d9dadd;"></div>
<div class="a" style="left:1334px;top:516px;width:2px;height:968px;background:#e0e0e0;"></div>
<div class="a" style="left:1524px;top:418px;width:2px;height:98px;background:#d9dadd;"></div>
<div class="a" style="left:1524px;top:516px;width:2px;height:968px;background:#e0e0e0;"></div>
<div class="a" style="left:1691px;top:418px;width:2px;height:98px;background:#d9dadd;"></div>
<div class="a" style="left:1691px;top:516px;width:2px;height:968px;background:#e0e0e0;"></div>
<div class="a" style="left:1858px;top:418px;width:2px;height:98px;background:#d9dadd;"></div>
<div class="a" style="left:1858px;top:516px;width:2px;height:968px;background:#e0e0e0;"></div>
<div class="a" style="left:2025px;top:418px;width:2px;height:98px;background:#d9dadd;"></div>
<div class="a" style="left:2025px;top:516px;width:2px;height:968px;background:#e0e0e0;"></div>
<div class="a" style="left:2216px;top:418px;width:2px;height:98px;background:#d9dadd;"></div>
<div class="a" style="left:2216px;top:516px;width:2px;height:968px;background:#e0e0e0;"></div>
<div class="a" style="left:2406px;top:418px;width:2px;height:98px;background:#d9dadd;"></div>
<div class="a" style="left:2406px;top:516px;width:2px;height:968px;background:#e0e0e0;"></div>
<div class="a" style="left:2573px;top:418px;width:2px;height:98px;background:#d9dadd;"></div>
<div class="a" style="left:2573px;top:516px;width:2px;height:968px;background:#e0e0e0;"></div>
<div class="a" style="left:2716px;top:418px;width:2px;height:98px;background:#d9dadd;"></div>
<div class="a" style="left:2716px;top:516px;width:2px;height:968px;background:#e0e0e0;"></div>
<div class="a" style="left:2883px;top:418px;width:2px;height:98px;background:#d9dadd;"></div>
<div class="a" style="left:2883px;top:516px;width:2px;height:968px;background:#e0e0e0;"></div>
<div class="a" style="left:3073px;top:418px;width:2px;height:98px;background:#d9dadd;"></div>
<div class="a" style="left:3073px;top:516px;width:2px;height:968px;background:#e0e0e0;"></div>
<div class="a" style="left:612px;top:1484px;width:2px;height:116px;background:#e0e0e0;"></div>
<div class="a" style="left:3073px;top:1484px;width:2px;height:116px;background:#e0e0e0;"></div>
<div class="a" style="left:612px;top:418px;width:2463px;height:2px;background:#d9dadd;"></div>
<div class="a" style="left:612px;top:514px;width:2463px;height:2px;background:#d9dadd;"></div>
<div class="a" style="left:612px;top:610px;width:2463px;height:2px;background:#e0e0e0;"></div>
<div class="a" style="left:612px;top:708px;width:2463px;height:2px;background:#e0e0e0;"></div>
<div class="a" style="left:612px;top:806px;width:2463px;height:2px;background:#e0e0e0;"></div>
<div class="a" style="left:612px;top:904px;width:2463px;height:2px;background:#e0e0e0;"></div>
<div class="a" style="left:612px;top:1000px;width:2463px;height:2px;background:#e0e0e0;"></div>
<div class="a" style="left:612px;top:1096px;width:2463px;height:2px;background:#e0e0e0;"></div>
<div class="a" style="left:612px;top:1192px;width:2463px;height:2px;background:#e0e0e0;"></div>
<div class="a" style="left:612px;top:1288px;width:2463px;height:2px;background:#e0e0e0;"></div>
<div class="a" style="left:612px;top:1384px;width:2463px;height:2px;background:#e0e0e0;"></div>
<div class="a" style="left:612px;top:1482px;width:2463px;height:2px;background:#e0e0e0;"></div>
<div class="a t" style="left:622px;top:449.0px;font-size:24px;line-height:36px;color:#111;font-weight:bold;">客户名称</div>
<div class="a t" style="left:802px;top:449.0px;font-size:24px;line-height:36px;color:#111;font-weight:bold;">行业类型</div>
<div class="a t" style="left:1018px;top:449.0px;font-size:24px;line-height:36px;color:#111;font-weight:bold;">模型得分</div>
<div class="a t" style="left:1185px;top:449.0px;font-size:24px;line-height:36px;color:#111;font-weight:bold;">模型等级</div>
<div class="a t" style="left:1352px;top:449.0px;font-size:24px;line-height:36px;color:#111;font-weight:bold;">调整后等级</div>
<div class="a t" style="left:1542px;top:449.0px;font-size:24px;line-height:36px;color:#111;font-weight:bold;">初评等级</div>
<div class="a t" style="left:1709px;top:449.0px;font-size:24px;line-height:36px;color:#111;font-weight:bold;">认定等级</div>
<div class="a t" style="left:1876px;top:449.0px;font-size:24px;line-height:36px;color:#111;font-weight:bold;">违约概率</div>
<div class="a t" style="left:2043px;top:449.0px;font-size:24px;line-height:36px;color:#111;font-weight:bold;">评级生效日</div>
<div class="a t" style="left:2234px;top:449.0px;font-size:24px;line-height:36px;color:#111;font-weight:bold;">评级失效日</div>
<div class="a t" style="left:2424px;top:449.0px;font-size:24px;line-height:36px;color:#111;font-weight:bold;">评级状态</div>
<div class="a t" style="left:2591px;top:449.0px;font-size:24px;line-height:36px;color:#111;font-weight:bold;">发起人</div>
<div class="a t" style="left:2734px;top:449.0px;font-size:24px;line-height:36px;color:#111;font-weight:bold;">流程状态</div>
<div class="a t" style="left:2901px;top:449.0px;font-size:24px;line-height:36px;color:#111;font-weight:bold;">当前处理人</div>
<div class="a t" style="left:622px;top:545.3px;font-size:27px;line-height:36px;color:#1a1a1a;font-weight:normal;transform:scaleX(0.95);transform-origin:0 50%;">2100601306</div>
<div class="a t" style="left:802px;top:545.0px;font-size:26px;line-height:36px;color:#1a1a1a;font-weight:normal;">住宅房屋建筑</div>
<div class="a t" style="left:2424px;top:545.0px;font-size:26px;line-height:36px;color:#1a1a1a;font-weight:normal;">未生效</div>
<div class="a t" style="left:2591px;top:545.3px;font-size:27px;line-height:36px;color:#1a1a1a;font-weight:normal;transform:scaleX(0.95);transform-origin:0 50%;">009085</div>
<div class="a t" style="left:2734px;top:545.0px;font-size:26px;line-height:36px;color:#1a1a1a;font-weight:normal;">待提交</div>
<div class="a t" style="left:2901px;top:545.3px;font-size:27px;line-height:36px;color:#1a1a1a;font-weight:normal;transform:scaleX(0.95);transform-origin:0 50%;">admin</div>
<div class="a t" style="left:622px;top:642.3px;font-size:27px;line-height:36px;color:#1a1a1a;font-weight:normal;transform:scaleX(0.95);transform-origin:0 50%;">2103303351</div>
<div class="a t" style="left:802px;top:642.0px;font-size:26px;line-height:36px;color:#1a1a1a;font-weight:normal;">市政设施管理</div>
<div class="a t" style="left:1018px;top:642.3px;font-size:27px;line-height:36px;color:#1a1a1a;font-weight:normal;transform:scaleX(0.95);transform-origin:0 50%;">50.47</div>
<div class="a t" style="left:1185px;top:642.3px;font-size:27px;line-height:36px;color:#1a1a1a;font-weight:normal;transform:scaleX(0.95);transform-origin:0 50%;">B</div>
<div class="a t" style="left:1352px;top:642.3px;font-size:27px;line-height:36px;color:#1a1a1a;font-weight:normal;transform:scaleX(0.95);transform-origin:0 50%;">B</div>
<div class="a t" style="left:1542px;top:642.3px;font-size:27px;line-height:36px;color:#1a1a1a;font-weight:normal;transform:scaleX(0.95);transform-origin:0 50%;">BB</div>
<svg class="a" style="left:1707.5px;top:626.0px;overflow:visible" width="68" height="68" viewBox="1707.5 626.0 68 68"><circle cx="1741.5" cy="660.0" r="28.3" fill="none" stroke="#ececec" stroke-width="6.4"/><path d="M1741.5,631.7 A28.3,28.3 0 0 1 1753.55,685.61" fill="none" stroke="#f44336" stroke-width="6.4"/><text x="1741.5" y="666.0" font-family="Liberation Sans" font-size="16" text-anchor="middle" fill="#222">BB</text></svg>
<div class="a t" style="left:1876px;top:642.3px;font-size:27px;line-height:36px;color:#1a1a1a;font-weight:normal;transform:scaleX(0.95);transform-origin:0 50%;">4.26%</div>
<div class="a t" style="left:2043px;top:642.3px;font-size:27px;line-height:36px;color:#1a1a1a;font-weight:normal;transform:scaleX(0.95);transform-origin:0 50%;">2023-10-16</div>
<div class="a t" style="left:2234px;top:642.3px;font-size:27px;line-height:36px;color:#1a1a1a;font-weight:normal;transform:scaleX(0.95);transform-origin:0 50%;">2024-10-15</div>
<div class="a t" style="left:2424px;top:642.0px;font-size:26px;line-height:36px;color:#1a1a1a;font-weight:normal;">生效</div>
<div class="a t" style="left:2591px;top:642.3px;font-size:27px;line-height:36px;color:#1a1a1a;font-weight:normal;transform:scaleX(0.95);transform-origin:0 50%;">010085</div>
<div class="a t" style="left:2734px;top:642.0px;font-size:26px;line-height:36px;color:#1a1a1a;font-weight:normal;">通过</div>
<div class="a t" style="left:622px;top:740.3px;font-size:27px;line-height:36px;color:#1a1a1a;font-weight:normal;transform:scaleX(0.95);transform-origin:0 50%;">2103303351</div>
<div class="a t" style="left:802px;top:740.0px;font-size:26px;line-height:36px;color:#1a1a1a;font-weight:normal;">市政设施管理</div>
<div class="a t" style="left:1018px;top:740.3px;font-size:27px;line-height:36px;color:#1a1a1a;font-weight:normal;transform:scaleX(0.95);transform-origin:0 50%;">43.45</div>
<div class="a t" style="left:1185px;top:740.3px;font-size:27px;line-height:36px;color:#1a1a1a;font-weight:normal;transform:scaleX(0.95);transform-origin:0 50%;">CCC</div>
<div class="a t" style="left:1352px;top:740.3px;font-size:27px;line-height:36px;color:#1a1a1a;font-weight:normal;transform:scaleX(0.95);transform-origin:0 50%;">CCC</div>
<div class="a t" style="left:1542px;top:740.3px;font-size:27px;line-height:36px;color:#1a1a1a;font-weight:normal;transform:scaleX(0.95);transform-origin:0 50%;">B</div>
<svg class="a" style="left:1707.5px;top:724.0px;overflow:visible" width="68" height="68" viewBox="1707.5 724.0 68 68"><circle cx="1741.5" cy="758.0" r="28.3" fill="none" stroke="#ececec" stroke-width="6.4"/><path d="M1741.5,729.7 A28.3,28.3 0 0 1 1758.13,735.10" fill="none" stroke="#f44336" stroke-width="6.4"/><text x="1741.5" y="764.0" font-family="Liberation Sans" font-size="16" text-anchor="middle" fill="#222">B</text></svg>
<div class="a t" style="left:1876px;top:740.3px;font-size:27px;line-height:36px;color:#1a1a1a;font-weight:normal;transform:scaleX(0.95);transform-origin:0 50%;">10.87%</div>
<div class="a t" style="left:2043px;top:740.3px;font-size:27px;line-height:36px;color:#1a1a1a;font-weight:normal;transform:scaleX(0.95);transform-origin:0 50%;">2023-10-14</div>
<div class="a t" style="left:2234px;top:740.3px;font-size:27px;line-height:36px;color:#1a1a1a;font-weight:normal;transform:scaleX(0.95);transform-origin:0 50%;">2024-10-13</div>
<div class="a t" style="left:2424px;top:740.0px;font-size:26px;line-height:36px;color:#1a1a1a;font-weight:normal;">失效</div>
<div class="a t" style="left:2591px;top:740.3px;font-size:27px;line-height:36px;color:#1a1a1a;font-weight:normal;transform:scaleX(0.95);transform-origin:0 50%;">010085</div>
<div class="a t" style="left:2734px;top:740.0px;font-size:26px;line-height:36px;color:#1a1a1a;font-weight:normal;">通过</div>
<div class="a t" style="left:622px;top:838.3px;font-size:27px;line-height:36px;color:#1a1a1a;font-weight:normal;transform:scaleX(0.95);transform-origin:0 50%;">2102803683</div>
<div class="a t" style="left:802px;top:838.0px;font-size:26px;line-height:36px;color:#1a1a1a;font-weight:normal;">其他建筑安装</div>
<div class="a t" style="left:1018px;top:838.3px;font-size:27px;line-height:36px;color:#1a1a1a;font-weight:normal;transform:scaleX(0.95);transform-origin:0 50%;">33.55</div>
<div class="a t" style="left:1185px;top:838.3px;font-size:27px;line-height:36px;color:#1a1a1a;font-weight:normal;transform:scaleX(0.95);transform-origin:0 50%;">C</div>
<div class="a t" style="left:1352px;top:838.3px;font-size:27px;line-height:36px;color:#1a1a1a;font-weight:normal;transform:scaleX(0.95);transform-origin:0 50%;">C</div>
<div class="a t" style="left:1542px;top:838.3px;font-size:27px;line-height:36px;color:#1a1a1a;font-weight:normal;transform:scaleX(0.95);transform-origin:0 50%;">C</div>
<svg class="a" style="left:1707.5px;top:822.0px;overflow:visible" width="68" height="68" viewBox="1707.5 822.0 68 68"><circle cx="1741.5" cy="856.0" r="28.3" fill="none" stroke="#ececec" stroke-width="6.4"/><path d="M1741.5,827.7 A28.3,28.3 0 0 1 1758.13,833.10" fill="none" stroke="#f44336" stroke-width="6.4"/><text x="1741.5" y="862.0" font-family="Liberation Sans" font-size="16" text-anchor="middle" fill="#222">C</text></svg>
<div class="a t" style="left:1876px;top:838.3px;font-size:27px;line-height:36px;color:#1a1a1a;font-weight:normal;transform:scaleX(0.95);transform-origin:0 50%;">57.42%</div>
<div class="a t" style="left:2043px;top:838.3px;font-size:27px;line-height:36px;color:#1a1a1a;font-weight:normal;transform:scaleX(0.95);transform-origin:0 50%;">2023-10-13</div>
<div class="a t" style="left:2234px;top:838.3px;font-size:27px;line-height:36px;color:#1a1a1a;font-weight:normal;transform:scaleX(0.95);transform-origin:0 50%;">2024-10-12</div>
<div class="a t" style="left:2424px;top:838.0px;font-size:26px;line-height:36px;color:#1a1a1a;font-weight:normal;">生效</div>
<div class="a t" style="left:2591px;top:838.3px;font-size:27px;line-height:36px;color:#1a1a1a;font-weight:normal;transform:scaleX(0.95);transform-origin:0 50%;">010085</div>
<div class="a t" style="left:2734px;top:838.0px;font-size:26px;line-height:36px;color:#1a1a1a;font-weight:normal;">通过</div>
<div class="a t" style="left:622px;top:935.3px;font-size:27px;line-height:36px;color:#1a1a1a;font-weight:normal;transform:scaleX(0.95);transform-origin:0 50%;">2007549419</div>
<div class="a t" style="left:802px;top:935.0px;font-size:26px;line-height:36px;color:#1a1a1a;font-weight:normal;">其他电力生产</div>
<div class="a t" style="left:1018px;top:935.3px;font-size:27px;line-height:36px;color:#1a1a1a;font-weight:normal;transform:scaleX(0.95);transform-origin:0 50%;">18.06</div>
<div class="a t" style="left:1185px;top:935.3px;font-size:27px;line-height:36px;color:#1a1a1a;font-weight:normal;transform:scaleX(0.95);transform-origin:0 50%;">C</div>
<div class="a t" style="left:1352px;top:935.3px;font-size:27px;line-height:36px;color:#1a1a1a;font-weight:normal;transform:scaleX(0.95);transform-origin:0 50%;">C</div>
<div class="a t" style="left:2424px;top:935.0px;font-size:26px;line-height:36px;color:#1a1a1a;font-weight:normal;">未生效</div>
<div class="a t" style="left:2591px;top:935.3px;font-size:27px;line-height:36px;color:#1a1a1a;font-weight:normal;transform:scaleX(0.95);transform-origin:0 50%;">010227</div>
<div class="a t" style="left:2734px;top:935.0px;font-size:26px;line-height:36px;color:#1a1a1a;font-weight:normal;">否决</div>
<div class="a t" style="left:622px;top:1031.3px;font-size:27px;line-height:36px;color:#1a1a1a;font-weight:normal;transform:scaleX(0.95);transform-origin:0 50%;">2103303351</div>
<div class="a t" style="left:802px;top:1031.0px;font-size:26px;line-height:36px;color:#1a1a1a;font-weight:normal;">市政设施管理</div>
<div class="a t" style="left:1018px;top:1031.3px;font-size:27px;line-height:36px;color:#1a1a1a;font-weight:normal;transform:scaleX(0.95);transform-origin:0 50%;">39.74</div>
<div class="a t" style="left:1185px;top:1031.3px;font-size:27px;line-height:36px;color:#1a1a1a;font-weight:normal;transform:scaleX(0.95);transform-origin:0 50%;">CC</div>
<div class="a t" style="left:2424px;top:1031.0px;font-size:26px;line-height:36px;color:#1a1a1a;font-weight:normal;">未生效</div>
<div class="a t" style="left:2591px;top:1031.3px;font-size:27px;line-height:36px;color:#1a1a1a;font-weight:normal;transform:scaleX(0.95);transform-origin:0 50%;">010085</div>
<div class="a t" style="left:2734px;top:1031.0px;font-size:26px;line-height:36px;color:#1a1a1a;font-weight:normal;">否决</div>
<div class="a t" style="left:622px;top:1127.3px;font-size:27px;line-height:36px;color:#1a1a1a;font-weight:normal;transform:scaleX(0.95);transform-origin:0 50%;">2102803683</div>
<div class="a t" style="left:802px;top:1127.0px;font-size:26px;line-height:36px;color:#1a1a1a;font-weight:normal;">其他建筑安装</div>
<div class="a t" style="left:1018px;top:1127.3px;font-size:27px;line-height:36px;color:#1a1a1a;font-weight:normal;transform:scaleX(0.95);transform-origin:0 50%;">43.32</div>
<div class="a t" style="left:1185px;top:1127.3px;font-size:27px;line-height:36px;color:#1a1a1a;font-weight:normal;transform:scaleX(0.95);transform-origin:0 50%;">CCC</div>
<div class="a t" style="left:1352px;top:1127.3px;font-size:27px;line-height:36px;color:#1a1a1a;font-weight:normal;transform:scaleX(0.95);transform-origin:0 50%;">CCC</div>
<div class="a t" style="left:2424px;top:1127.0px;font-size:26px;line-height:36px;color:#1a1a1a;font-weight:normal;">未生效</div>
<div class="a t" style="left:2591px;top:1127.3px;font-size:27px;line-height:36px;color:#1a1a1a;font-weight:normal;transform:scaleX(0.95);transform-origin:0 50%;">010085</div>
<div class="a t" style="left:2734px;top:1127.0px;font-size:26px;line-height:36px;color:#1a1a1a;font-weight:normal;">否决</div>
<div class="a t" style="left:622px;top:1223.3px;font-size:27px;line-height:36px;color:#1a1a1a;font-weight:normal;transform:scaleX(0.95);transform-origin:0 50%;">2006461707</div>
<div class="a t" style="left:802px;top:1223.0px;font-size:26px;line-height:36px;color:#1a1a1a;font-weight:normal;">房地产开发经营</div>
<div class="a t" style="left:1018px;top:1223.3px;font-size:27px;line-height:36px;color:#1a1a1a;font-weight:normal;transform:scaleX(0.95);transform-origin:0 50%;">36.46</div>
<div class="a t" style="left:1185px;top:1223.3px;font-size:27px;line-height:36px;color:#1a1a1a;font-weight:normal;transform:scaleX(0.95);transform-origin:0 50%;">CC</div>
<div class="a t" style="left:1352px;top:1223.3px;font-size:27px;line-height:36px;color:#1a1a1a;font-weight:normal;transform:scaleX(0.95);transform-origin:0 50%;">CC</div>
<div class="a t" style="left:2424px;top:1223.0px;font-size:26px;line-height:36px;color:#1a1a1a;font-weight:normal;">未生效</div>
<div class="a t" style="left:2591px;top:1223.3px;font-size:27px;line-height:36px;color:#1a1a1a;font-weight:normal;transform:scaleX(0.95);transform-origin:0 50%;">009085</div>
<div class="a t" style="left:2734px;top:1223.0px;font-size:26px;line-height:36px;color:#1a1a1a;font-weight:normal;">待提交</div>
<div class="a t" style="left:622px;top:1319.3px;font-size:27px;line-height:36px;color:#1a1a1a;font-weight:normal;transform:scaleX(0.95);transform-origin:0 50%;">2007602788</div>
<div class="a t" style="left:802px;top:1319.0px;font-size:26px;line-height:36px;color:#1a1a1a;font-weight:normal;">正餐服务</div>
<div class="a t" style="left:1018px;top:1319.3px;font-size:27px;line-height:36px;color:#1a1a1a;font-weight:normal;transform:scaleX(0.95);transform-origin:0 50%;">61.61</div>
<div class="a t" style="left:1185px;top:1319.3px;font-size:27px;line-height:36px;color:#1a1a1a;font-weight:normal;transform:scaleX(0.95);transform-origin:0 50%;">BBB</div>
<div class="a t" style="left:1352px;top:1319.3px;font-size:27px;line-height:36px;color:#1a1a1a;font-weight:normal;transform:scaleX(0.95);transform-origin:0 50%;">BBB</div>
<div class="a t" style="left:1542px;top:1319.3px;font-size:27px;line-height:36px;color:#1a1a1a;font-weight:normal;transform:scaleX(0.95);transform-origin:0 50%;">BBB</div>
<div class="a t" style="left:2424px;top:1319.0px;font-size:26px;line-height:36px;color:#1a1a1a;font-weight:normal;">未生效</div>
<div class="a t" style="left:2591px;top:1319.3px;font-size:27px;line-height:36px;color:#1a1a1a;font-weight:normal;transform:scaleX(0.95);transform-origin:0 50%;">009085</div>
<div class="a t" style="left:2734px;top:1319.0px;font-size:26px;line-height:36px;color:#1a1a1a;font-weight:normal;">审批中</div>
<div class="a t" style="left:622px;top:1416.3px;font-size:27px;line-height:36px;color:#1a1a1a;font-weight:normal;transform:scaleX(0.95);transform-origin:0 50%;">2007698100</div>
<div class="a t" style="left:802px;top:1416.0px;font-size:26px;line-height:36px;color:#1a1a1a;font-weight:normal;">房地产开发经营</div>
<div class="a t" style="left:1018px;top:1416.3px;font-size:27px;line-height:36px;color:#1a1a1a;font-weight:normal;transform:scaleX(0.95);transform-origin:0 50%;">67.75</div>
<div class="a t" style="left:1185px;top:1416.3px;font-size:27px;line-height:36px;color:#1a1a1a;font-weight:normal;transform:scaleX(0.95);transform-origin:0 50%;">A</div>
<div class="a t" style="left:1352px;top:1416.3px;font-size:27px;line-height:36px;color:#1a1a1a;font-weight:normal;transform:scaleX(0.95);transform-origin:0 50%;">A</div>
<div class="a t" style="left:1542px;top:1416.3px;font-size:27px;line-height:36px;color:#1a1a1a;font-weight:normal;transform:scaleX(0.95);transform-origin:0 50%;">A</div>
<svg class="a" style="left:1707.5px;top:1400.0px;overflow:visible" width="68" height="68" viewBox="1707.5 1400.0 68 68"><circle cx="1741.5" cy="1434.0" r="28.3" fill="none" stroke="#ececec" stroke-width="6.4"/><path d="M1741.5,1405.7 A28.3,28.3 0 1 1 1717.61,1418.84" fill="none" stroke="#4caf50" stroke-width="6.4"/><text x="1741.5" y="1440.0" font-family="Liberation Sans" font-size="16" text-anchor="middle" fill="#222">A</text></svg>
<div class="a t" style="left:1876px;top:1416.3px;font-size:27px;line-height:36px;color:#1a1a1a;font-weight:normal;transform:scaleX(0.95);transform-origin:0 50%;">0.65%</div>
<div class="a t" style="left:2043px;top:1416.3px;font-size:27px;line-height:36px;color:#1a1a1a;font-weight:normal;transform:scaleX(0.95);transform-origin:0 50%;">2023-07-26</div>
<div class="a t" style="left:2234px;top:1416.3px;font-size:27px;line-height:36px;color:#1a1a1a;font-weight:normal;transform:scaleX(0.95);transform-origin:0 50%;">2024-07-26</div>
<div class="a t" style="left:2424px;top:1416.0px;font-size:26px;line-height:36px;color:#1a1a1a;font-weight:normal;">生效</div>
<div class="a t" style="left:2591px;top:1416.3px;font-size:27px;line-height:36px;color:#1a1a1a;font-weight:normal;transform:scaleX(0.95);transform-origin:0 50%;">012941</div>
<div class="a t" style="left:2734px;top:1416.0px;font-size:26px;line-height:36px;color:#1a1a1a;font-weight:normal;">通过</div>
<div class="a" style="left:614px;top:1619px;width:2459px;height:31px;background:#fafafa;"></div>
<div class="a" style="left:614px;top:1650px;width:2459px;height:2px;background:#e0e0e0;"></div>
<svg class="a" style="left:625px;top:1620px;overflow:visible" width="25" height="30" viewBox="625 1620 25 30" fill="#000"><path d="M643.8,1626.5 V1643.3 Q643.8,1645 642.2,1644 L630.5,1636.2 Q629.6,1635 630.5,1634 L642.2,1626 Q643.8,1625 643.8,1626.5 Z" fill="#8a8a8a"/></svg>
<svg class="a" style="left:3035px;top:1620px;overflow:visible" width="30" height="30" viewBox="3035 1620 30 30" fill="#000"><path d="M3043.5,1626.5 V1643.3 Q3043.5,1645 3045.1,1644 L3056.8,1636.2 Q3057.7,1635 3056.8,1634 L3045.1,1626 Q3043.5,1625 3043.5,1626.5 Z" fill="#8a8a8a"/></svg>
<div class="a" style="left:1117px;top:1626px;width:1911px;height:18px;background:#8c8c8c;border-radius:9px;"></div>
<div class="a" style="left:612px;top:1600px;width:2459px;height:150px;border:2px solid #e0e0e0;border-top:none;border-radius:0 0 8px 8px;"></div>
<div class="a t" style="left:2193px;top:1683.5px;font-size:24px;line-height:34px;color:#222;font-weight:normal;">每页的行数:</div>
<div class="a t" style="left:2351px;top:1682.5px;font-size:28px;line-height:36px;color:#222;font-weight:normal;">10</div>
<svg class="a" style="left:2396.29px;top:1677.70px;overflow:visible" width="46.32" height="46.32" viewBox="0 0 24 24" fill="#757575"><path d="M7 10l5 5 5-5z"/></svg>
<svg class="a" style="left:2485px;top:1680px;overflow:visible" width="40" height="40" viewBox="2485 1680 40 40" fill="#000"><g fill="#5c6787"><rect x="2490.6" y="1689.3" width="3.6" height="23"/></g><polyline points="2515,1690.3 2503.5,1701.1 2515,1711.8" fill="none" stroke="#5c6787" stroke-width="3.8"/></svg>
<div class="a" style="left:2534.5px;top:1671px;width:56.5px;height:59.5px;background:#14234d;border-radius:8px;box-shadow:0 2px 4px rgba(0,0,0,0.3);"></div>
<div class="a t" style="left:2534.5px;top:1684.0px;font-size:28px;line-height:36px;color:#fff;font-weight:normal;width:56.5px;text-align:center;">1</div>
<div class="a t" style="left:2593px;top:1684.0px;font-size:28px;line-height:36px;color:#14234d;font-weight:normal;width:60px;text-align:center;">2</div>
<div class="a t" style="left:2653px;top:1684.0px;font-size:28px;line-height:36px;color:#14234d;font-weight:normal;width:60px;text-align:center;">3</div>
<div class="a t" style="left:2713px;top:1684.0px;font-size:28px;line-height:36px;color:#14234d;font-weight:normal;width:60px;text-align:center;">4</div>
<div class="a t" style="left:2773.6px;top:1684.0px;font-size:28px;line-height:36px;color:#14234d;font-weight:normal;width:60px;text-align:center;">5</div>
<svg class="a" style="left:2845px;top:1680px;overflow:visible" width="40" height="40" viewBox="2845 1680 40 40" fill="#000"><g fill="#14234d"><rect x="2871.8" y="1689.3" width="3.6" height="23"/></g><polyline points="2851.5,1690.3 2863,1701.1 2851.5,1711.8" fill="none" stroke="#14234d" stroke-width="3.8"/></svg>
<div class="a t" style="left:2890px;top:1683.5px;font-size:24px;line-height:34px;color:#222;font-weight:normal;">共 460 条记录.</div>
<div class="a" style="left:2121px;top:303.5px;width:158px;height:110px;border:5.6px solid #f5221b;border-radius:5px;"></div>
<div class="a" style="left:2719.5px;top:435px;width:127.5px;height:158px;border:5.6px solid #f5221b;border-radius:5px;"></div>
<div class="a" style="left:0;top:1600px;width:3095px;height:168px;box-sizing:border-box;border-bottom:2px solid #dcdcdc;border-radius:0 0 17px 9px;"></div>
</body></html>
